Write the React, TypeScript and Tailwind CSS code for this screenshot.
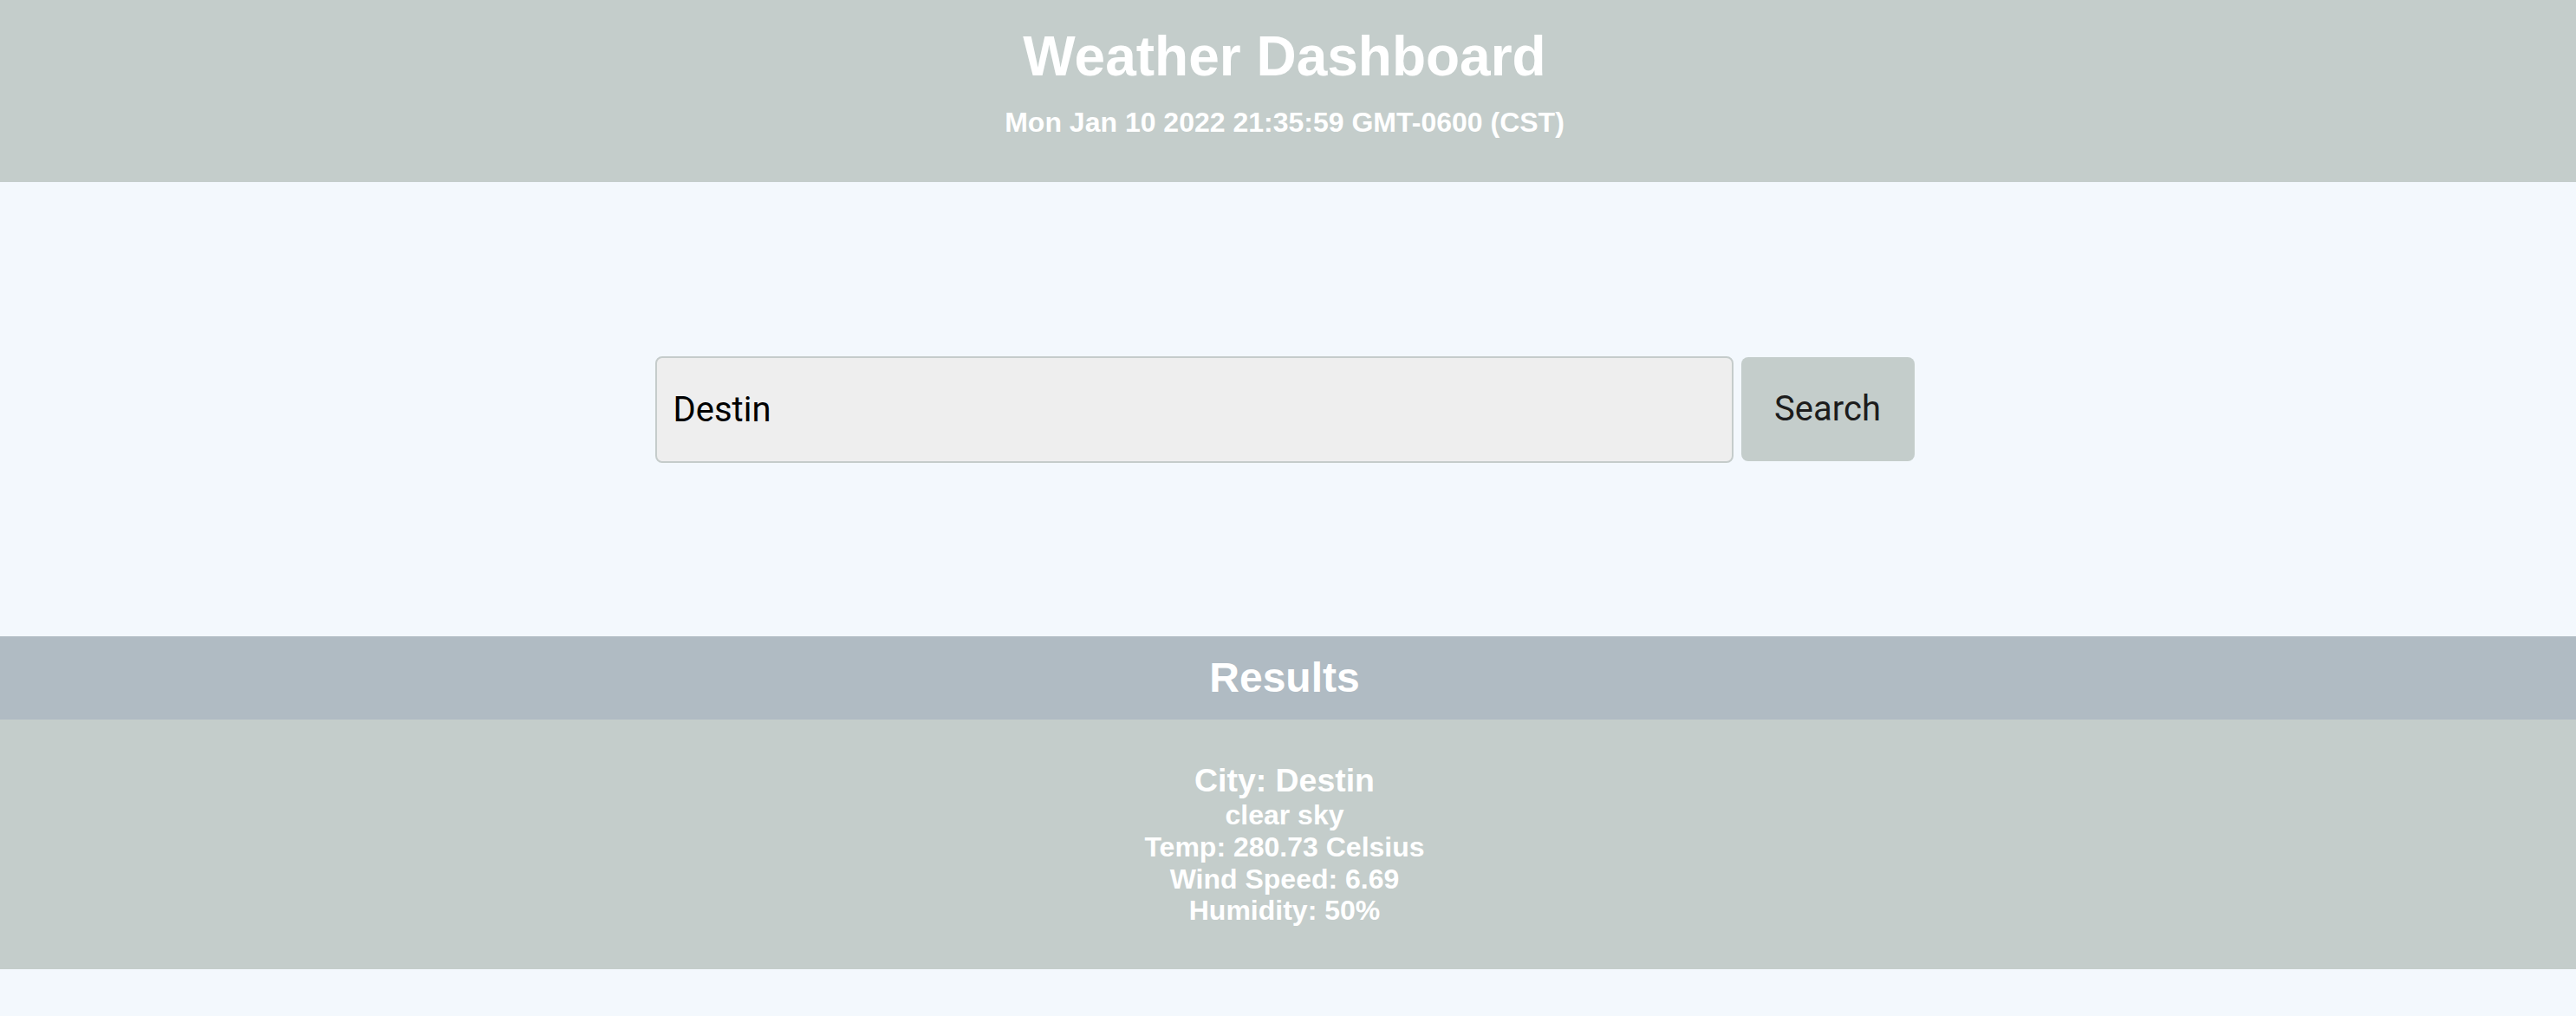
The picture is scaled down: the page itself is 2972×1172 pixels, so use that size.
export default function App() {
  const weather = {
    city: "Destin",
    description: "clear sky",
    temp: 280.73,
    wind: 6.69,
    humidity: 50,
  };

  return (
    <div className="min-h-screen w-full bg-[#f3f8fd] font-['Liberation_Sans',Arial,sans-serif]">
      <header className="h-[210px] bg-[#c4cdcb] pt-[29px] pr-[8px] text-center text-white">
        <h1 className="text-[64px] font-bold leading-[1.15]">
          Weather Dashboard
        </h1>
        <h3 className="mt-[20px] text-[32px] font-bold leading-[1.15]">
          Mon Jan 10 2022 21:35:59 GMT-0600 (CST)
        </h3>
      </header>

      <main className="flex h-[524px] items-center justify-center gap-[9px] pr-[8px]">
        <input
          type="text"
          defaultValue="Destin"
          className="h-[123px] w-[1244px] rounded-[8px] border-2 border-[#c5cccb] bg-[#eeeeee] px-[19px] font-['Roboto',sans-serif] text-[40px] text-black outline-none"
        />
        <button className="h-[120px] w-[200px] rounded-[8px] bg-[#c4cdcb] font-['Roboto',sans-serif] text-[40px] text-[#1c1c1c]">
          Search
        </button>
      </main>

      <section>
        <div className="flex h-[96px] items-center justify-center bg-[#b0bbc3] pr-[8px]">
          <h2 className="text-[48px] font-bold leading-[1.15] text-white">
            Results
          </h2>
        </div>
        <div className="bg-[#c4cdcb] py-[49px] pr-[8px] text-center font-bold text-white">
          <h3 className="text-[37.44px] leading-[1.15]">City: {weather.city}</h3>
          <p className="text-[32px] leading-[1.15]">{weather.description}</p>
          <p className="text-[32px] leading-[1.15]">Temp: {weather.temp} Celsius</p>
          <p className="text-[32px] leading-[1.15]">Wind Speed: {weather.wind}</p>
          <p className="text-[32px] leading-[1.15]">Humidity: {weather.humidity}%</p>
        </div>
      </section>
    </div>
  );
}
